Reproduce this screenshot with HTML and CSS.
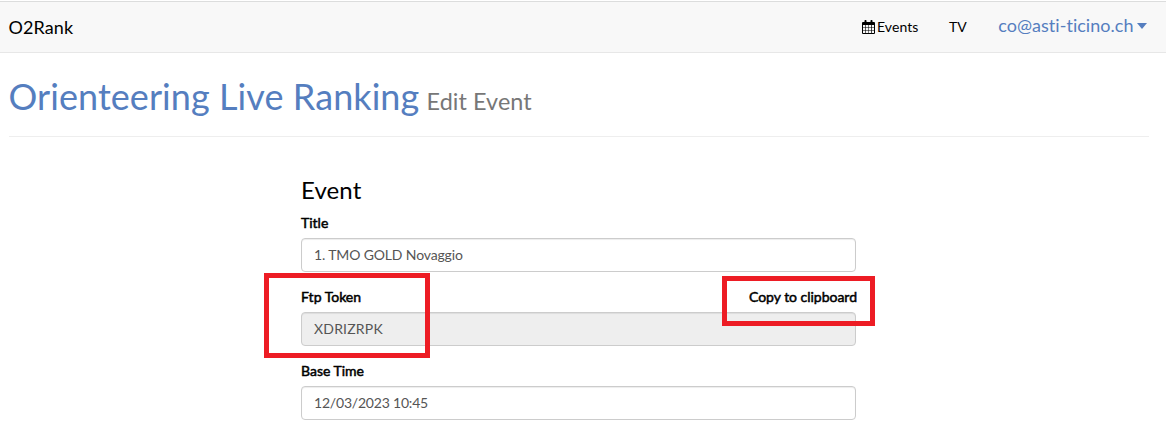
FILE: index.html
```html
<!DOCTYPE html>
<html lang="en">
<head>
<meta charset="utf-8">
<title>O2Rank</title>
<link rel="stylesheet" href="styles.css">
</head>
<body>
<nav class="navbar">
  <a class="brand">O2Rank</a>
  <div class="links">
    <a class="events"><svg class="calendar" viewBox="0 0 13 14" width="13" height="14"><path fill="#000" fill-rule="evenodd" d="M1 2h1.5V.8Q2.5 0 3.2 0h.6Q4.5 0 4.5.8V2h4V.8Q8.5 0 9.2 0h.6q.7 0 .7.8V2H12q1 0 1 1v10q0 1-1 1H1q-1 0-1-1V3q0-1 1-1zM1 5v2h2V5zm2.6 0v2h2.6V5zm3.1 0v2h2.6V5zM10 5v2h2V5zM1 7.6v2.3h2V7.6zm2.6 0v2.3h2.6V7.6zm3.1 0v2.3h2.6V7.6zm3.3 0v2.3h2V7.6zM1 10.6V13h2v-2.4zm2.6 0V13h2.6v-2.4zm3.1 0V13h2.6v-2.4zm3.3 0V13h2v-2.4z"/></svg><span>Events</span></a>
    <a class="tv">TV</a>
    <a class="user"><span>co@asti-ticino.ch</span><i class="caret"></i></a>
  </div>
</nav>
<main>
  <h1 class="heading">Orienteering Live Ranking <small>Edit Event</small></h1>
  <form class="form">
    <h2 class="legend">Event</h2>
    <div class="group"><label class="label">Title</label><input class="field title" value="1. TMO GOLD Novaggio"></div>
    <div class="group">
      <div class="row"><label class="label">Ftp Token</label><span class="label copy">Copy to clipboard</span></div>
      <input class="field locked" value="XDRIZRPK" readonly>
      <div class="mark mark-token"></div>
      <div class="mark mark-copy"></div>
    </div>
    <div class="group"><label class="label">Base Time</label><input class="field time" value="12/03/2023 10:45"></div>
  </form>
</main>
</body>
</html>
```
FILE: styles.css
```css
* { box-sizing: border-box; }
body { display: flow-root; margin: 0; height: 424px; overflow: hidden; background: #fff; color: #000; font: 14px/20px Lato, sans-serif; font-variant-ligatures: none; }
main { display: flow-root; }
.navbar { display: flex; justify-content: space-between; height: 52px; margin-top: 1px; padding: 0 19px 0 8.5px; background: #f8f8f8; border-top: 1px solid #dcdddd; border-bottom: 1px solid #e7e7e7; }
.brand { font-size: 18px; line-height: 50px; letter-spacing: .1px; }
.links { display: flex; line-height: 50px; }
.events { display: flex; align-items: center; gap: 2px; height: 50px; margin-right: 30.5px; letter-spacing: .1px; }
.calendar { margin-left: -.5px; }
.tv { margin-right: 31.5px; }
.user { display: flex; align-items: flex-start; gap: 3.5px; height: 50px; font-size: 18px; line-height: 46px; letter-spacing: .03px; color: #557ebf; }
.caret { margin-top: 21px; border: 5.5px solid transparent; border-top: 6px solid #557ebf; border-bottom: 0; }
.heading { height: 66px; margin: 18px 17px 0 8.5px; border-bottom: 1px solid #eee; font-size: 36px; line-height: 50px; font-weight: 400; letter-spacing: .07px; color: #557ebf; }
.heading small { margin-left: -2px; font-size: 23.4px; color: #777; }
.form { width: 555px; margin: 37px 0 0 301px; }
.legend { margin: 0 0 8px; font-size: 24px; line-height: 31px; font-weight: 400; letter-spacing: .1px; }
.group { position: relative; height: 74px; }
.row { display: flex; justify-content: space-between; }
.label { display: block; height: 25px; font-size: 14px; line-height: 20px; font-weight: 400; -webkit-text-stroke: .5px #000; }
.copy { margin-right: -1px; letter-spacing: -.02px; }
.field { display: block; width: 555px; height: 34px; padding: 5px 12px 7px; border: 1px solid #ccc; border-radius: 4px; background: #fff; box-shadow: inset 0 1px 1px rgba(0,0,0,.075); color: #555; font: 14px/20px Lato, sans-serif; }
.title { letter-spacing: -.14px; }
.time { letter-spacing: -.2px; }
.locked { background: #eee; letter-spacing: .2px; }
.mark { position: absolute; border: 5px solid #ed1c24; }
.mark-token { left: -37px; top: -14px; width: 166px; height: 85px; }
.mark-copy { left: 421px; top: -11px; width: 153px; height: 50px; }
```
